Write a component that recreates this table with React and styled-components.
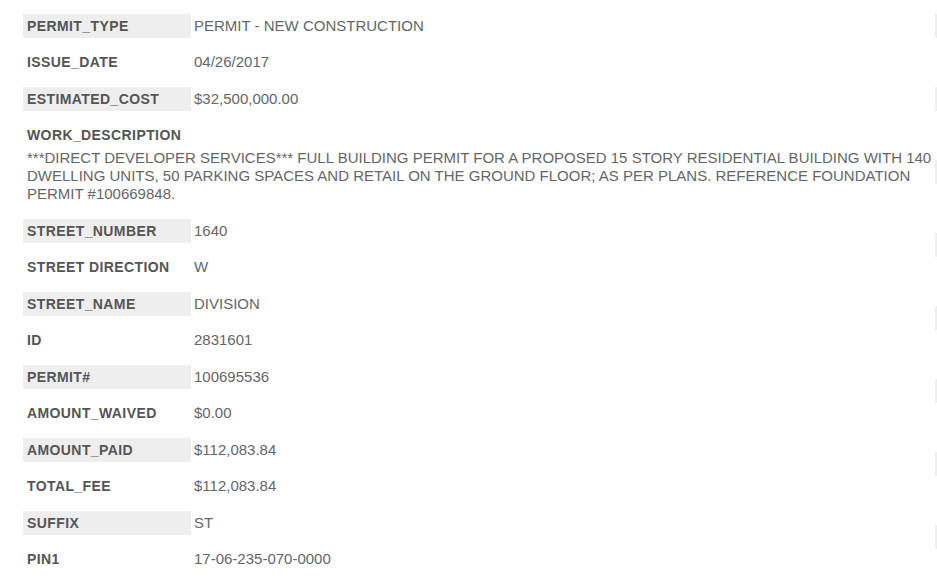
import React from "react";
import styled, { createGlobalStyle } from "styled-components";

const Global = createGlobalStyle`
  html, body {
    margin: 0;
    padding: 0;
    background: #fff;
    overflow: hidden;
  }
  body {
    font-family: "Liberation Sans", Arial, sans-serif;
    font-size: 14px;
  }
`;

const Page = styled.div`
  display: flex;
  align-items: flex-start;
  padding: 14px 0 0 23px;
  width: max-content;
`;

const Card = styled.div`
  width: 912px;
  flex: none;
  display: flex;
  flex-direction: column;
`;

const Row = styled.div`
  display: flex;
  flex-direction: ${(p) => (p.$stacked ? "column" : "row")};
  margin-bottom: 13px;
  &:nth-child(odd) {
    margin-bottom: 12px;
  }
  &:nth-child(odd) > .lbl {
    background: #eee;
  }
`;

const Label = styled.div`
  width: 168px;
  flex: none;
  height: 24px;
  line-height: 24px;
  padding-left: 4px;
  box-sizing: border-box;
  font-size: 14px;
  letter-spacing: 0.4px;
  font-weight: bold;
  color: #555;
  white-space: nowrap;
  overflow: hidden;
`;

const Value = styled.div`
  flex: 1;
  height: 24px;
  line-height: 24px;
  padding-left: 3px;
  font-size: 15px;
  color: #666;
  white-space: nowrap;
`;

const Description = styled.div`
  padding: 2px 0 3px 4px;
  font-size: 15px;
  line-height: 18px;
  color: #666;
`;

const fields = [
  ["PERMIT_TYPE", "PERMIT - NEW CONSTRUCTION"],
  ["ISSUE_DATE", "04/26/2017"],
  ["ESTIMATED_COST", "$32,500,000.00"],
  [
    "WORK_DESCRIPTION",
    "***DIRECT DEVELOPER SERVICES*** FULL BUILDING PERMIT FOR A PROPOSED 15 STORY RESIDENTIAL BUILDING WITH 140 DWELLING UNITS, 50 PARKING SPACES AND RETAIL ON THE GROUND FLOOR; AS PER PLANS. REFERENCE FOUNDATION PERMIT #100669848.",
    true,
  ],
  ["STREET_NUMBER", "1640"],
  ["STREET DIRECTION", "W"],
  ["STREET_NAME", "DIVISION"],
  ["ID", "2831601"],
  ["PERMIT#", "100695536"],
  ["AMOUNT_WAIVED", "$0.00"],
  ["AMOUNT_PAID", "$112,083.84"],
  ["TOTAL_FEE", "$112,083.84"],
  ["SUFFIX", "ST"],
  ["PIN1", "17-06-235-070-0000"],
];

/* next permit card: only the left edge of its label cells shows in the frame */
const nextFields = Array.from({ length: 15 }, (_, i) => [`k${i}`, ""]);

function PermitCard({ items, blank }) {
  return (
    <Card>
      {items.map(([k, v, stacked]) =>
        stacked ? (
          <Row key={k} $stacked>
            <Label className="lbl">{k}</Label>
            <Description>{v}</Description>
          </Row>
        ) : (
          <Row key={k}>
            <Label className="lbl">{blank ? "" : k}</Label>
            <Value>{v}</Value>
          </Row>
        )
      )}
    </Card>
  );
}

export default function App() {
  return (
    <>
      <Global />
      <Page>
        <PermitCard items={fields} />
        <PermitCard items={nextFields} blank />
      </Page>
    </>
  );
}
